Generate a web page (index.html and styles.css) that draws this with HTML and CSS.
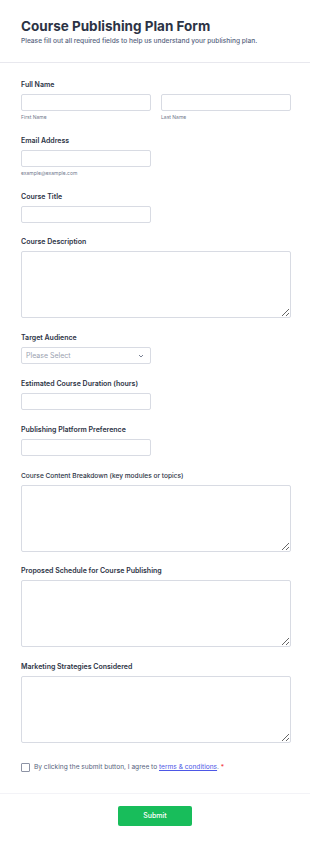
FILE: index.html
```html
<!DOCTYPE html>
<html lang="en">
  <head>
    <meta charset="UTF-8" />
    <meta name="viewport" content="width=device-width, initial-scale=1.0" />
    <title>Course Publishing Plan Form</title>
    <link rel="stylesheet" href="styles.css">
  </head>
  <body>
    <div class="form">
      <div class="form-header">
        <h1>Course Publishing Plan Form</h1>
        <p>Please fill out all required fields to help us understand your publishing plan.</p>
      </div>

      <div class="form-body">
        <div class="field">
          <label>Full Name</label>
          <div class="name-row">
            <div class="name-col">
              <input type="text" class="input" />
              <span class="sublabel">First Name</span>
            </div>
            <div class="name-col">
              <input type="text" class="input" />
              <span class="sublabel">Last Name</span>
            </div>
          </div>
        </div>

        <div class="field">
          <label>Email Address</label>
          <input type="email" class="input half" />
          <span class="sublabel">example@example.com</span>
        </div>

        <div class="field">
          <label>Course Title</label>
          <input type="text" class="input half" />
        </div>

        <div class="field">
          <label>Course Description</label>
          <textarea class="textarea"></textarea>
        </div>

        <div class="field">
          <label>Target Audience</label>
          <div class="select half">
            <span>Please Select</span>
            <svg width="6" height="4" viewBox="0 0 6 4">
              <path d="M1 1l2 2 2-2" fill="none" stroke="#6b7489" stroke-width="0.9" />
            </svg>
          </div>
        </div>

        <div class="field">
          <label>Estimated Course Duration (hours)</label>
          <input type="text" class="input half" />
        </div>

        <div class="field">
          <label>Publishing Platform Preference</label>
          <input type="text" class="input half" />
        </div>

        <div class="field">
          <label class="light">Course Content Breakdown (key modules or topics)</label>
          <textarea class="textarea"></textarea>
        </div>

        <div class="field">
          <label>Proposed Schedule for Course Publishing</label>
          <textarea class="textarea"></textarea>
        </div>

        <div class="field">
          <label>Marketing Strategies Considered</label>
          <textarea class="textarea"></textarea>
        </div>

        <div class="terms">
          <span class="checkbox"></span>
          <span>By clicking the submit button, I agree to <a href="#">terms &amp; conditions</a>. <b class="required">*</b></span>
        </div>
      </div>

      <div class="form-footer">
        <button class="submit">Submit</button>
      </div>
    </div>
  </body>
</html>
```

FILE: styles.css
```css
body {
  margin: 0;
  background-color: #fff;
  font-family: Inter, "Noto Sans", sans-serif;
  color: #2c3345;
}
.form-header {
  padding: 17px 21px 0;
  height: 45px;
  border-bottom: 1px solid #e8e8ee;
}
.form-header h1 {
  margin: 0;
  font-size: 13.5px;
  line-height: 18px;
  font-weight: 700;
  color: #2c3345;
}
.form-header p {
  margin: 2px 0 0;
  font-size: 6.6px;
  line-height: 8px;
  font-weight: 500;
  color: #57647e;
}
.form-body {
  padding: 17px 19px 0 21px;
  display: flex;
  flex-direction: column;
  gap: 14.8px;
}
.field {
  display: flex;
  flex-direction: column;
  align-items: flex-start;
}
.field label {
  font-size: 7px;
  line-height: 10px;
  font-weight: 600;
  margin-bottom: 4px;
}
.field label.light {
  font-size: 6.6px;
  font-weight: 500;
}
.name-row {
  display: flex;
  gap: 10px;
  width: 100%;
}
.name-col {
  flex: 1;
  display: flex;
  flex-direction: column;
}
.input,
.textarea,
.select {
  box-sizing: border-box;
  border: 1px solid #d8dbe3;
  border-radius: 2px;
  background-color: #fff;
  margin: 0;
}
.input {
  height: 17px;
  width: 100%;
}
.half {
  width: 130px;
}
.textarea {
  width: 100%;
  height: 67px;
  resize: vertical;
  font-family: inherit;
}
.select {
  height: 17px;
  display: flex;
  justify-content: space-between;
  align-items: center;
  padding: 0 6px 0 4px;
  font-size: 7px;
  color: #9aa1b0;
}
.sublabel {
  margin-top: 3px;
  font-size: 5px;
  line-height: 7px;
  color: #727a8e;
}
.terms {
  display: flex;
  align-items: center;
  gap: 4px;
  margin-top: 5px;
  font-size: 6.6px;
  color: #57647e;
}
.checkbox {
  width: 7px;
  height: 7px;
  border: 1px solid #8d93a5;
  border-radius: 1px;
  flex-shrink: 0;
}
.terms a {
  color: #4d57e6;
}
.required {
  color: #f23a3c;
  font-weight: 400;
}
.form-footer {
  margin-top: 21px;
  border-top: 1px solid #f3f3f7;
  padding: 12px 0 16px;
  display: flex;
  justify-content: center;
}
.submit {
  width: 74px;
  height: 20px;
  border: none;
  border-radius: 2px;
  background-color: #18bd5b;
  color: #fff;
  font-family: inherit;
  font-size: 7px;
  font-weight: 500;
}
```
